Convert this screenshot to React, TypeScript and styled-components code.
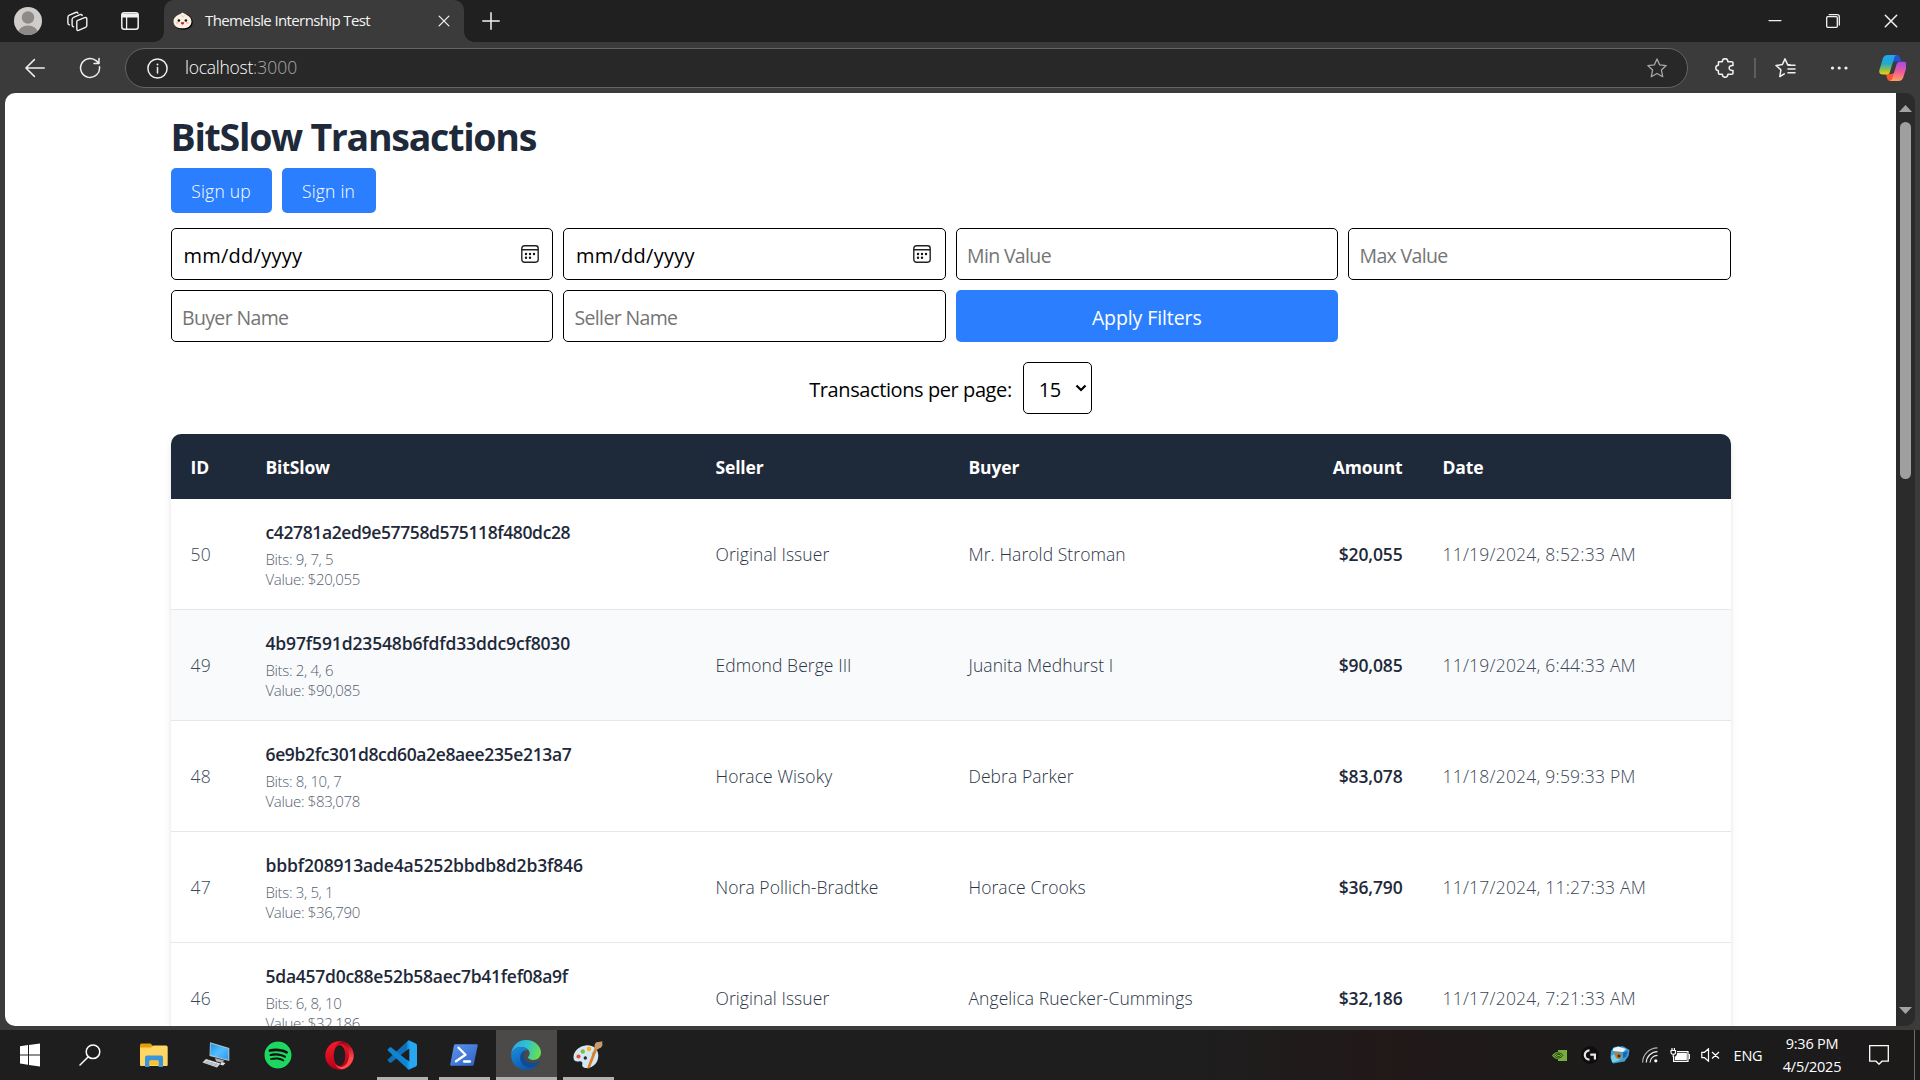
import React from 'react';
import styled, { createGlobalStyle, css } from 'styled-components';
import { FaSpotify } from 'react-icons/fa';

const GlobalStyle = createGlobalStyle`
  *, *::before, *::after { box-sizing: border-box; }
  body {
    margin: 0;
    background: #3b3b3b;
    overflow: hidden;
    font-family: 'Open Sans', 'Noto Sans', sans-serif;
  }
  svg { display: block; flex: none; }
`;

const Desktop = styled.div`
  width: 1920px;
  height: 1080px;
  display: flex;
  flex-direction: column;
  background: #3b3b3b;
`;

/* ---------- Browser chrome ---------- */

const TabStrip = styled.header`
  height: 42px;
  display: flex;
  background: #202020;
  color: #f2f2f2;
`;

const IconSlot = styled.div<{ $w: number }>`
  width: ${(p) => p.$w}px;
  flex: none;
  display: flex;
  align-items: center;
  justify-content: center;
`;

const Tab = styled.div`
  position: relative;
  width: 300px;
  margin-left: 2px;
  padding: 0 14px 0 9px;
  display: flex;
  align-items: center;
  background: #3b3b3b;
  border-radius: 10px 10px 0 0;
  &::before,
  &::after {
    content: '';
    position: absolute;
    bottom: 0;
    width: 10px;
    height: 10px;
  }
  &::before {
    left: -10px;
    background: radial-gradient(circle at 0 0, #202020 9.5px, #3b3b3b 10px);
  }
  &::after {
    right: -10px;
    background: radial-gradient(circle at 100% 0, #202020 9.5px, #3b3b3b 10px);
  }
`;

const TabTitle = styled.span`
  flex: 1;
  margin-left: 12px;
  padding-bottom: 2px;
  font-size: 15px;
  font-weight: 400;
  letter-spacing: -0.62px;
  line-height: 20px;
  color: #f4f4f4;
  white-space: nowrap;
`;

const WindowControls = styled.div`
  display: flex;
  margin-left: auto;
`;

const Toolbar = styled.div`
  height: 51px;
  padding: 6px 0 5px 7px;
  display: flex;
  color: #f0f0f0;
`;

const AddressBar = styled.div`
  width: 1563px;
  height: 40px;
  margin-left: 8px;
  padding: 0 20px 0 21px;
  display: flex;
  align-items: center;
  background: #282828;
  border: 1px solid #646464;
  border-radius: 20px;
`;

const Url = styled.span`
  flex: 1;
  margin-left: 17px;
  padding-bottom: 2px;
  font-size: 17.5px;
  font-weight: 300;
  letter-spacing: -0.25px;
  color: #fff;
`;

const Port = styled.span`
  letter-spacing: 0;
  color: #a8a8a8;
`;

const ExtensionSlot = styled(IconSlot)`
  margin-left: 7px;
`;

const ToolbarDivider = styled.i`
  width: 2px;
  height: 20px;
  align-self: center;
  margin: 0 0 0 -1px;
  background: #5e5e5e;
`;

const Viewport = styled.div`
  height: 933px;
  margin: 0 5px;
  display: flex;
  overflow: hidden;
  border-radius: 10px;
  background: #2b2b2b;
`;

const Scrollbar = styled.div`
  width: 19px;
  padding: 12px 0;
  display: flex;
  flex-direction: column;
  align-items: center;
  background: #2b2b2b;
`;

const Thumb = styled.div`
  width: 11px;
  height: 357px;
  margin: 10px 0 auto;
  border-radius: 6px;
  background: #9f9f9f;
`;

const ScrollArrow = styled.i<{ $down?: boolean }>`
  width: 13px;
  height: 7px;
  background: #a3a3a3;
  clip-path: ${(p) => (p.$down ? 'polygon(0 0, 100% 0, 50% 100%)' : 'polygon(50% 0, 100% 100%, 0 100%)')};
`;

/* ---------- Web page ---------- */

const Page = styled.main`
  width: 1891px;
  height: 933px;
  overflow: hidden;
  background: #fff;
`;

const Container = styled.div`
  width: 1600px;
  margin: 0 auto;
  padding: 20px;
`;

const Title = styled.h1`
  margin: 0 0 10px;
  padding-top: 1px;
  height: 45px;
  font-size: 37.5px;
  font-weight: 700;
  line-height: 45px;
  letter-spacing: -1.27px;
  color: #1e2939;
`;

const AuthButtons = styled.div`
  display: flex;
  gap: 10px;
  margin-bottom: 15px;
`;

const primary = css`
  border: 0;
  border-radius: 5px;
  background: #2b7fff;
  color: #fff;
  font-family: inherit;
`;

const AuthButton = styled.button<{ $w: number }>`
  ${primary}
  width: ${(p) => p.$w}px;
  height: 45px;
  padding: 2px 0 0;
  font-size: 17.5px;
  font-weight: 300;
  line-height: 25px;
  letter-spacing: 0.2px;
`;

const Filters = styled.div`
  display: grid;
  grid-template-columns: repeat(4, 1fr);
  grid-auto-rows: 52px;
  gap: 10px;
  margin-bottom: 20px;
`;

const field = css`
  width: 100%;
  height: 52px;
  border: 1px solid #000;
  border-radius: 5px;
  background: #fff;
  font-family: inherit;
`;

const TextField = styled.input`
  ${field}
  padding: 3px 10.5px 0;
  font-size: 19.5px;
  letter-spacing: -0.65px;
  &::placeholder {
    color: #757575;
    opacity: 1;
  }
`;

const DateField = styled.div`
  ${field}
  padding: 3px 13.5px 0 12px;
  display: flex;
  align-items: center;
  justify-content: space-between;
  font-size: 20px;
  letter-spacing: 0.25px;
  svg { margin-top: -4px; }
`;

const ApplyButton = styled.button`
  ${primary}
  padding: 3px 0 0;
  font-size: 19.5px;
  letter-spacing: -0.1px;
`;

const PageSize = styled.div`
  display: flex;
  align-items: center;
  justify-content: center;
  gap: 11px;
  height: 52px;
  margin-bottom: 20px;
`;

const PageSizeLabel = styled.span`
  padding-top: 4px;
  font-size: 20px;
  font-weight: 500;
  letter-spacing: -0.41px;
  line-height: 30px;
`;

const Select = styled.div`
  ${field}
  width: 69px;
  padding: 3px 4px 0 15px;
  display: flex;
  align-items: center;
  justify-content: space-between;
  font-size: 20px;
  letter-spacing: -0.4px;
  svg { margin-top: -3px; }
`;

const TableCard = styled.div`
  overflow: hidden;
  border-radius: 10px;
  background: #fff;
`;

const CardShadow = styled.div`
  border-radius: 10px;
  box-shadow: 0 5px 8px -1px rgba(0, 0, 0, 0.1), 0 2px 5px -2px rgba(0, 0, 0, 0.1);
`;

const Table = styled.table`
  width: 1560px;
  table-layout: fixed;
  border-collapse: separate;
  border-spacing: 0;
  font-size: 17.5px;
  line-height: 25px;
`;

const HeadCell = styled.th<{ $w?: number; $right?: boolean }>`
  width: ${(p) => (p.$w ? `${p.$w}px` : 'auto')};
  height: 65px;
  padding: 2px 20px 0;
  background: #1e2939;
  color: #fff;
  font-weight: 700;
  letter-spacing: -0.15px;
  text-align: ${(p) => (p.$right ? 'right' : 'left')};
`;

const Row = styled.tr<{ $hovered?: boolean }>`
  background: ${(p) => (p.$hovered ? '#f9fafc' : '#fff')};
`;

const Cell = styled.td<{ $muted?: boolean }>`
  height: 111px;
  padding: 1px 20px 0;
  border-bottom: 1px solid #e5e7eb;
  color: ${(p) => (p.$muted ? '#3c4757' : '#2b3546')};
  font-weight: 300;
  letter-spacing: ${(p) => (p.$muted ? 0.22 : 0.07)}px;
  white-space: nowrap;
`;

const AmountCell = styled(Cell)`
  color: #1e2939;
  font-weight: 600;
  letter-spacing: -0.15px;
  text-align: right;
`;

const Hash = styled.div<{ $tracking: number }>`
  margin-bottom: 4px;
  color: #1e2939;
  font-weight: 600;
  letter-spacing: ${(p) => p.$tracking}px;
`;

const Detail = styled.div`
  color: #555e70;
  font-size: 15px;
  line-height: 20px;
  letter-spacing: -0.34px;
`;

/* ---------- Taskbar ---------- */

const Taskbar = styled.footer`
  height: 50px;
  margin-top: 4px;
  display: flex;
  background: linear-gradient(90deg, #1e1e1e 0%, #1e1e1e 62%, #221919 72%, #1b1b1b 86%, #1d1a1a 100%);
  color: #fff;
`;

const AppList = styled.div`
  display: flex;
  gap: 1px;
  margin-left: 4px;
`;

const AppButton = styled.div<{ $running?: boolean; $active?: boolean }>`
  position: relative;
  width: 61px;
  padding-right: 2px;
  display: flex;
  align-items: center;
  justify-content: center;
  background: ${(p) => (p.$active ? '#4b4a49' : 'transparent')};
  &::after {
    content: '';
    position: absolute;
    bottom: 0;
    left: ${(p) => (p.$active ? 0 : 5)}px;
    right: ${(p) => (p.$active ? 0 : 5)}px;
    height: 3px;
    background: ${(p) => (p.$running ? '#b3b1b0' : 'transparent')};
  }
`;

const Tray = styled.div`
  margin-left: auto;
  display: flex;
`;

const TrayText = styled.div<{ $w: number }>`
  width: ${(p) => p.$w}px;
  display: flex;
  flex-direction: column;
  align-items: center;
  justify-content: center;
  font-size: 14.5px;
  line-height: 23px;
  letter-spacing: -0.25px;
  white-space: nowrap;
`;

const ShowDesktop = styled.div`
  width: 6px;
  margin-left: 9px;
  border-left: 1px solid #6d6b6b;
`;

/* ---------- Icons ---------- */

type StrokeProps = { w: number; h?: number; sw?: number; vb?: string; color?: string; children: React.ReactNode };
const Stroke = ({ w, h = w, sw = 1.5, vb, color = 'currentColor', children }: StrokeProps) => (
  <svg width={w} height={h} viewBox={vb ?? `0 0 ${w} ${h}`} fill="none" stroke={color} strokeWidth={sw} strokeLinecap="round" strokeLinejoin="round">
    {children}
  </svg>
);

const Avatar = () => (
  <svg width="28" height="28" viewBox="0 0 28 28">
    <defs><clipPath id="av"><circle cx="14" cy="14" r="14" /></clipPath></defs>
    <g clipPath="url(#av)">
      <rect width="28" height="28" fill="#cfcdca" />
      <circle cx="14" cy="10.5" r="6.2" fill="#8d8a87" />
      <ellipse cx="14" cy="25.5" rx="9.5" ry="7" fill="#8d8a87" />
    </g>
  </svg>
);

const Workspaces = () => (
  <Stroke w={22} sw={1.4}>
    <path d="M10.6 9.6 18 6.7q2.2-.7 2.2 1.3v6.4q0 1.4-1.3 1.9l-6.4 2.9q-2.3.9-2.3-1.3v-6.3q0-1.4.4-2Z" transform="translate(.6 1)" />
    <path d="M7.6 16.9q-1.5-.3-1.5-1.8V9.6q0-1.7 1.5-2.3l6.3-2.6q1.7-.6 2.3.7" />
    <path d="M3.4 14.9q-1.5-.3-1.5-1.8V7.3Q1.9 5.7 3.4 5.1L9.7 2.5q1.7-.6 2.3.7" />
  </Stroke>
);

const TabActions = () => (
  <svg width="18" height="18" viewBox="0 0 18 18" fill="none" stroke="#f2f2f2" strokeWidth="1.5">
    <rect x="0.8" y="0.8" width="16.4" height="16.4" rx="2.5" />
    <path d="M1 2.6h16M1 4.3h16" strokeWidth="2.4" />
    <path d="M5.6 5v12" strokeWidth="1.3" />
  </svg>
);

const Bun = () => (
  <svg width="20" height="18" viewBox="0 0 20 18">
    <path d="M11 1.8c5 .6 8.6 4.2 8.6 8.4 0 5-4 7.3-9 7.3S1.8 15.5 1.4 11.5Z" fill="#000" />
    <path d="M9.5.5c1 1.3 9 2.8 9 8.9 0 4.6-4 6.9-9 6.9S.5 14 .5 9.4C.5 3.3 8.3 2.2 9.5.5Z" fill="#fbf0df" />
    <path d="M8 2.8q1.3 1 1.6 2.3M11.5 3.2q-.8.9-1 1.7" stroke="#d9c4ae" strokeWidth=".8" fill="none" />
    <circle cx="5.9" cy="8.5" r="1.3" fill="#111" /><circle cx="12.9" cy="8.5" r="1.3" fill="#111" />
    <ellipse cx="4.3" cy="10.8" rx="1.5" ry=".9" fill="#feb4c2" /><ellipse cx="14.5" cy="10.8" rx="1.5" ry=".9" fill="#feb4c2" />
    <path d="M7.8 10.3h3.4q-.2 2.4-1.7 2.4t-1.7-2.4Z" fill="#b71422" />
  </svg>
);

const CloseIcon = ({ size }: { size: number }) => (
  <Stroke w={size} vb="0 0 14 14" sw={1.5}><path d="M1.3 1.3l11.4 11.4M12.7 1.3 1.3 12.7" /></Stroke>
);
const Plus = () => <Stroke w={18} sw={1.5}><path d="M9 .8v16.4M.8 9h16.4" /></Stroke>;
const Minimize = () => <Stroke w={14} h={2} sw={1.2}><path d="M1 .6h12" /></Stroke>;
const Restore = () => (
  <Stroke w={14} sw={1.3}><rect x=".7" y="2.7" width="10.6" height="10.6" rx="1" /><path d="M3.2.7h8q2.1 0 2.1 2v8.4" /></Stroke>
);
const Back = () => <Stroke w={20} sw={1.5}><path d="M19.2 10H1M9.4 1.6.9 10l8.5 8.4" /></Stroke>;
const Refresh = () => (
  <Stroke w={22} sw={1.5}><path d="M20.5 9.8a9.5 9.5 0 1 1-3.1-5.9l2.3 2.3M20 1.6v5h-5" /></Stroke>
);
const Info = () => (
  <Stroke w={21} sw={1.5}><circle cx="10.5" cy="10.5" r="9.6" /><path d="M10.5 9.5v5.5" /><path d="M10.5 6.4v.2" strokeWidth="2" /></Stroke>
);
const Star = () => (
  <Stroke w={20} sw={1.3} color="#a8a8a8"><path d="M10 .9l2.7 6 6.5.7-4.8 4.4 1.3 6.7L10 15.5l-5.7 3.2 1.3-6.7L.8 7.6l6.5-.7Z" /></Stroke>
);
const Puzzle = () => (
  <Stroke w={20} sw={1.5}>
    <path d="M3.5 3.7h3.8c.2-4 5.4-4 5.6 0h3.9q1.2 0 1.2 1.2v2.7c-5.2-.7-5.2 5.5 0 4.8v2.7q0 1.2-1.2 1.2h-3.9c-.2 4-5.4 4-5.6 0H4.6q-1.2 0-1.2-1.2v-2.4c-3.5-.4-3.5-5 0-5.4Z" />
  </Stroke>
);
const Favorites = () => (
  <Stroke w={21} h={20} sw={1.5}>
    <path d="M9.3 15.8 4.8 18.5l1.1-6.6L1 7.4l6.3-.8L10 .9l2.6 5.7 2.6.3" />
    <path d="M13 7.2h7M13 11h7M13 14.8h7" />
  </Stroke>
);
const Dots = () => (
  <svg width="18" height="4" viewBox="0 0 18 4" fill="#f2f2f2"><circle cx="2.5" cy="2" r="1.6" /><circle cx="9.2" cy="2" r="1.6" /><circle cx="16" cy="2" r="1.6" /></svg>
);
const Copilot = () => (
  <svg width="28" height="28" viewBox="-1 0 28 28">
    <defs>
      <linearGradient id="cp1" x1="0" y1="0" x2="0" y2="1"><stop offset="0" stopColor="#1fa5f2" /><stop offset=".45" stopColor="#25a9c8" /><stop offset=".75" stopColor="#8ac04b" /><stop offset="1" stopColor="#f5cf0d" /></linearGradient>
      <linearGradient id="cp2" x1=".5" y1="0" x2=".4" y2="1"><stop offset="0" stopColor="#a54be8" /><stop offset=".5" stopColor="#ee5a9b" /><stop offset="1" stopColor="#ffa25b" /></linearGradient>
    </defs>
    <path d="M14 1h4.2c2 0 2.5 1.5 3 3.2l.9 3.2h-5.5c-2 0-3 1.6-3.3 3Z" fill="#2450d6" />
    <path d="M14.3 27H11c-2 0-2.6-1.5-3-3l-1.1-4h5.3c2 0 3-1 3.6-3Z" fill="#f4562f" />
    <path d="M8.5 1h9.3c-1.6.2-2.2 1.6-2.7 3.2l-4.3 14c-.5 1.5-1.5 2.2-3 2.2H3.5C.6 20.4-.1 18.4.4 16L3.7 5C4.5 2.5 6 1 8.5 1Z" fill="url(#cp1)" />
    <path d="M19.5 27H10.8c1.6-.2 2.2-1.6 2.7-3.2l4.2-13.7c.5-1.5 1.5-2.4 3-2.4h4c2.9 0 3.6 2 3.1 4.4L24.4 23c-.8 2.5-2.4 4-4.9 4Z" fill="url(#cp2)" />
  </svg>
);

const Calendar = () => (
  <svg width="18" height="18" viewBox="0 0 18 18" fill="none" stroke="#222" strokeWidth="1.4">
    <rect x=".8" y=".8" width="16.4" height="16.4" rx="2.6" /><path d="M.8 4.8h16.4" />
    <g fill="#111" stroke="none"><circle cx="5" cy="9" r="1.2" /><circle cx="9" cy="9" r="1.2" /><circle cx="13" cy="9" r="1.2" /><circle cx="5" cy="12.8" r="1.2" /><circle cx="9" cy="12.8" r="1.2" /></g>
  </svg>
);
const Chevron = () => <Stroke w={12} h={8} sw={2.2}><path d="M1.5 1.5 6 6l4.5-4.5" strokeLinecap="butt" strokeLinejoin="miter" /></Stroke>;

const WindowsLogo = () => (
  <svg width="20" height="24" viewBox="0 0 20 24" fill="#fff">
    <path d="M0 3.3 8 2.1v9.4H0ZM9 2 20 .4v11.1H9ZM0 12.5h8v9.3l-8-1.2ZM9 12.5h11v11L9 22Z" />
  </svg>
);
const Search = () => <Stroke w={22} sw={1.5}><circle cx="14" cy="7.8" r="6.8" /><path d="M9.3 12.8 1 21" /></Stroke>;
const Explorer = () => (
  <svg width="28" height="24" viewBox="0 0 28 24">
    <path d="M0 2q0-1.5 1.5-1.5h9L13 3v4H0Z" fill="#e0a106" />
    <path d="M0 4.5h11L13.5 2.5H26q1.7 0 1.7 1.7V22q0 1-1 1H1q-1 0-1-1Z" fill="#ffd564" />
    <path d="M5 24V14.5q0-2 2-2h14q2 0 2 2V24h-4.5v-5.5q0-1-1-1h-7q-1 0-1 1V24Z" fill="#3b95dc" />
    <path d="M9.5 18.5q0-1 1-1h7q1 0 1 1V22h-9Z" fill="#f8c330" />
  </svg>
);
const ThisPc = () => (
  <svg width="28" height="26" viewBox="0 0 28 26">
    <defs><linearGradient id="pc" x1="0" y1="0" x2="1" y2="1"><stop offset="0" stopColor="#1b94ee" /><stop offset=".5" stopColor="#55bdff" /><stop offset="1" stopColor="#2a9bf2" /></linearGradient></defs>
    <path d="M8 .3 27.3 6v13L7.5 14Z" fill="#b7c3cb" /><path d="M8.8 1.5 26.3 6.7v11L8.3 13Z" fill="url(#pc)" />
    <path d="m13 16 9.5 2.5-3 2.2-5.5-1.5Z" fill="#a9b3b9" />
    <path d="m4 17 14.5 4.5-3.5 4L.5 20.5Z" fill="#dfe3e6" /><path d="m3.5 19 13 4M2.3 20.2l13 4M7 18.3l-3 3.2M11 19.5l-3 3.3M15 20.7l-3 3.4" stroke="#9aa4ab" strokeWidth=".7" />
    <path d="m20 20 3.5 1-2.5 2.5-3-1Z" fill="#dfe3e6" />
  </svg>
);
const SpotifyDisc = styled.div`
  display: flex;
  width: 28px;
  height: 28px;
  border-radius: 50%;
  color: #1ed760;
  background: #111;
`;
const Opera = () => (
  <svg width="29" height="29" viewBox="0 0 29 29">
    <defs><linearGradient id="op" x1="0" y1="0" x2=".3" y2="1"><stop offset="0" stopColor="#ff1b2d" /><stop offset="1" stopColor="#b5001a" /></linearGradient><linearGradient id="op2" x1="0" y1="0" x2="0" y2="1"><stop offset="0" stopColor="#9c0010" /><stop offset=".6" stopColor="#ff4b4b" /></linearGradient></defs>
    <circle cx="14.5" cy="14.5" r="14.2" fill="url(#op)" />
    <path d="M10 6.3C12 4 14 3 16 3c4 0 8 5 8 11.5S20 26 16 26c-2 0-4-1-6-3.3 2 4.5 6 6 9 5.3 5.5-2 9.7-7.3 9.7-13.5S24.5 3 19 1c-3-.7-7 .8-9 5.3Z" fill="url(#op2)" />
    <ellipse cx="14.5" cy="14.5" rx="5.8" ry="10.5" fill="#1e1e1e" />
  </svg>
);
const VsCode = () => (
  <svg width="30" height="30" viewBox="0 0 30 30">
    <path d="M21.5.3 1 19.3q-.8.9 0 1.8l1.7 1.5q.8.6 1.6 0L22.3 8.5Z" fill="#0f70b7" />
    <path d="M21.5 29.7 1 10.7q-.8-.9 0-1.8l1.7-1.5q.8-.6 1.6 0l18 14.1Z" fill="#0c86d3" />
    <path d="M21.7.2 28.8 3.6q1.2.6 1.2 2v18.8q0 1.4-1.2 2l-7.1 3.4Z" fill="#27a6f2" />
    <path d="M22.3 8.5v13L14 15Z" fill="#1e1e1e" /><path d="M20.3 1.7 22.3 0v8.5l-2 1.5ZM20.3 28.3l2 1.7v-8.5l-2-1.5Z" fill="#1c97e6" />
  </svg>
);
const PowerShell = () => (
  <svg width="28" height="22" viewBox="0 0 28 22">
    <defs><linearGradient id="ps" x1="0" y1="0" x2="1" y2="1"><stop offset="0" stopColor="#5c96f0" /><stop offset="1" stopColor="#3061c4" /></linearGradient></defs>
    <path d="M5.3.3h21.4q1.3 0 1 1.3l-4 18.8q-.3 1.3-1.6 1.3H1.2q-1.3 0-1-1.3l3.7-18.8Q4.2.3 5.3.3Z" fill="url(#ps)" />
    <path d="m8.5 3.8 7 7-9.5 6.5M14 17.5h6" stroke="#fff" strokeWidth="2.3" fill="none" strokeLinecap="round" strokeLinejoin="round" />
  </svg>
);
const Edge = () => (
  <svg width="30" height="30" viewBox="0 0 30 30">
    <defs>
      <linearGradient id="e1" x1="0" y1=".3" x2="1" y2=".5"><stop offset="0" stopColor="#2aa5e6" /><stop offset=".5" stopColor="#2fc3cf" /><stop offset="1" stopColor="#6be04a" /></linearGradient>
      <linearGradient id="e2" x1="0" y1="0" x2=".6" y2="1"><stop offset="0" stopColor="#1a8fdf" /><stop offset="1" stopColor="#0e56a8" /></linearGradient>
    </defs>
    <path d="M.2 14C.8 6 7 0 15 0c9 0 15 6.5 15 12.5 0 4.500-3.500 7.500-7.500 7.500-3.500 0-5.500-1.400-5.500-2.400 0-.9 1.700-1.500 1.700-4.300C18.700 9.500 14.500 7 10.500 7 5 7 1.200 10.500.2 14Z" fill="url(#e1)" />
    <path d="M.1 15C.3 10.300 5 7 10 7c3 0 6 1.200 7.500 3.200-4-1-8 2-8 7 0 6 5 12 13 9.800q3.300-1 4.500-2.500C24.500 28 20 30 15 30 6 30 0 23 .1 15Z" fill="url(#e2)" />
    <path d="M13.500 10.700c-3 1.300-5 5-4 9.300C11 26 17 29 22.500 27c2.500-.9 5.500-3.500 5.700-4.700.2-.8-.4-.9-1-.6-2 1-4 1.400-6.200 1.200-5-.4-8.500-3.500-8.500-7.400 0-2 .8-3.500 1.900-4.300Z" fill="#0f4c98" />
  </svg>
);
const Paint = () => (
  <svg width="30" height="28" viewBox="0 0 30 28">
    <path d="M12.500 4.500c7-1 12.500 3.500 12.800 9.500.3 7.500-5 13-11.500 13-4 0-5-2-4.500-4 .4-2-1-3-3.500-2.500C2.500 21 .3 19.500.5 16 .8 10 6 5.400 12.500 4.500Z" fill="#d3e8f3" />
    <circle cx="5.500" cy="15.500" r="2.100" fill="#e8483a" /><circle cx="9.800" cy="10.500" r="2.200" fill="#7cc043" /><circle cx="16" cy="8" r="2.300" fill="#fbb21d" />
    <circle cx="20.500" cy="12.500" r="1.800" fill="#8cc4e8" /><circle cx="12.300" cy="17" r="1.700" fill="#2b2b2b" />
    <path d="M24.200 8.500 16.800 27l-2.500.8.700-3.300L21.700 7Z" fill="#dc7d22" />
    <path d="M21.300 7c.3-1.500 0-3.500 1.200-5C23.800.4 26 1.500 29.500.3c-.8 1.700.7 3-.7 5.200-1.300 2-3.300 1.700-4.600 3.300Z" fill="#c79c6c" />
  </svg>
);

const Nvidia = () => (
  <svg width="16" height="11" viewBox="0 0 16 11">
    <path d="M6 0h9v11H6Z" fill="#76b03a" />
    <path d="M0 5.600C2 2.800 4.500 1.800 7 1.800c2.500 0 4.300 1.500 5.500 3.300C11 7.500 9 9.300 6.500 9.300 3.800 9.300 1.500 8 0 5.600Z" fill="#76b03a" />
    <path d="M2 5.500C3.300 3.800 5 3 6.800 3c2 0 3.300 1 4.200 2.300C9.800 7 8.300 8 6.500 8 4.700 8 3 7 2 5.500ZM4.600 5.400c.6-.8 1.400-1.200 2.300-1.100.8.100 1.400.6 1.700 1.200-.6.800-1.200 1.200-2 1.200-.9 0-1.500-.5-2-1.300Z" fill="none" stroke="#22301a" strokeWidth=".9" />
  </svg>
);
const LogiG = () => (
  <svg width="18" height="18" viewBox="0 0 18 18">
    <circle cx="9" cy="9" r="9" fill="#0e0e0e" />
    <path d="M8.500 4.300A4.700 4.700 0 0 0 8.500 13.700" stroke="#e8e8e8" strokeWidth="2.200" fill="none" /><path d="M9.300 8.600h4.600v5" stroke="#e8e8e8" strokeWidth="2.200" fill="none" />
  </svg>
);
const Fish = () => (
  <svg width="20" height="18" viewBox="0 0 20 18">
    <path d="M1 5 4 1l9-.7L19.500 4l-1 6-4 5.500L3 17.500.5 12Z" fill="#3d9fd8" />
    <path d="M3 2.500 8 .5l8 2.500-3 3-10-1Z" fill="#eef3f6" /><path d="M1 10q5-4 9-1t-2 6l-6 1.500Z" fill="#77d0ea" />
    <path d="M4 7.500 9 6.500l3 3-2 4-4-1.500Z" fill="#c7772e" /><circle cx="9" cy="10" r="1.500" fill="#263c22" /><path d="M13 6.500 18 5l-2 6-3 1Z" fill="#1a68b5" />
  </svg>
);
const Wifi = () => (
  <svg width="16" height="16" viewBox="0 0 16 16" fill="none" stroke="#e8e8e8" strokeWidth="1.200">
    <path d="M.6 15.500A15 15 0 0 1 15.500.8" stroke="#b5b5b5" /><path d="M4.300 15.500A11.300 11.300 0 0 1 15.500 4.600" /><path d="M8 15.500A7.600 7.600 0 0 1 15.500 8.300" />
    <circle cx="13.800" cy="13.800" r="1.600" fill="#fff" stroke="none" />
  </svg>
);
const Battery = () => (
  <svg width="20" height="14" viewBox="0 0 20 14" fill="none" stroke="#fff" strokeWidth="1.200">
    <path d="M7 3.600h11v9.800H3.600V8" /><path d="M18.600 6.500h1v4h-1" /><path d="M7.500 5.500h8.700v6H5.500V9.200L7.500 7Z" fill="#fff" />
    <path d="M1 2.500h4.500v2.300q0 1.500-2.200 1.500T1 4.800ZM2 0v2.500M4.400 0v2.500M3.200 6.300V9" />
  </svg>
);
const Muted = () => (
  <svg width="19" height="14" viewBox="0 0 19 14" fill="none" stroke="#fff" strokeWidth="1.200">
    <path d="M.8 4.300h2.700L7.500.8v12.400L3.500 9.700H.8ZM11 4l7 6.500M18 4l-7 6.500" />
  </svg>
);
const Notifications = () => (
  <svg width="20" height="20" viewBox="0 0 20 20" fill="none" stroke="#fff" strokeWidth="1.300"><path d="M.7.700h18.600v15.500H13l-3 3-3-3H.7Z" /></svg>
);

/* ---------- Data ---------- */

const transactions = [
  { id: 50, hash: 'c42781a2ed9e57758d575118f480dc28', tracking: -0.38, bits: '9, 7, 5', value: '$20,055', seller: 'Original Issuer', buyer: 'Mr. Harold Stroman', date: '11/19/2024, 8:52:33 AM' },
  { id: 49, hash: '4b97f591d23548b6fdfd33ddc9cf8030', tracking: -0.14, bits: '2, 4, 6', value: '$90,085', seller: 'Edmond Berge III', buyer: 'Juanita Medhurst I', date: '11/19/2024, 6:44:33 AM' },
  { id: 48, hash: '6e9b2fc301d8cd60a2e8aee235e213a7', tracking: -0.36, bits: '8, 10, 7', value: '$83,078', seller: 'Horace Wisoky', buyer: 'Debra Parker', date: '11/18/2024, 9:59:33 PM' },
  { id: 47, hash: 'bbbf208913ade4a5252bbdb8d2b3f846', tracking: -0.15, bits: '3, 5, 1', value: '$36,790', seller: 'Nora Pollich-Bradtke', buyer: 'Horace Crooks', date: '11/17/2024, 11:27:33 AM' },
  { id: 46, hash: '5da457d0c88e52b58aec7b41fef08a9f', tracking: -0.26, bits: '6, 8, 10', value: '$32,186', seller: 'Original Issuer', buyer: 'Angelica Ruecker-Cummings', date: '11/17/2024, 7:21:33 AM' },
];

const apps = [
  { name: 'explorer', icon: <Explorer /> },
  { name: 'pc', icon: <ThisPc /> },
  { name: 'spotify', icon: <SpotifyDisc><FaSpotify size={28} /></SpotifyDisc> },
  { name: 'opera', icon: <Opera /> },
  { name: 'vscode', icon: <VsCode />, running: true },
  { name: 'powershell', icon: <PowerShell />, running: true },
  { name: 'edge', icon: <Edge />, running: true, active: true },
  { name: 'paint', icon: <Paint />, running: true },
];

export default function App() {
  return (
    <Desktop>
      <GlobalStyle />
      <TabStrip>
        <IconSlot $w={56}><Avatar /></IconSlot>
        <IconSlot $w={42}><Workspaces /></IconSlot>
        <IconSlot $w={64}><TabActions /></IconSlot>
        <Tab>
          <Bun />
          <TabTitle>ThemeIsle Internship Test</TabTitle>
          <CloseIcon size={12} />
        </Tab>
        <IconSlot $w={53}><Plus /></IconSlot>
        <WindowControls>
          <IconSlot $w={58}><Minimize /></IconSlot>
          <IconSlot $w={58}><Restore /></IconSlot>
          <IconSlot $w={58}><CloseIcon size={14} /></IconSlot>
        </WindowControls>
      </TabStrip>
      <Toolbar>
        <IconSlot $w={56}><Back /></IconSlot>
        <IconSlot $w={54}><Refresh /></IconSlot>
        <AddressBar>
          <Info />
          <Url>localhost<Port>:3000</Port></Url>
          <Star />
        </AddressBar>
        <ExtensionSlot $w={60}><Puzzle /></ExtensionSlot>
        <ToolbarDivider />
        <IconSlot $w={58}><Favorites /></IconSlot>
        <IconSlot $w={50}><Dots /></IconSlot>
        <IconSlot $w={56}><Copilot /></IconSlot>
      </Toolbar>

      <Viewport>
        <Page>
          <Container>
            <Title>BitSlow Transactions</Title>
            <AuthButtons>
              <AuthButton $w={101}>Sign up</AuthButton>
              <AuthButton $w={94}>Sign in</AuthButton>
            </AuthButtons>
            <Filters>
              <DateField>mm/dd/yyyy<Calendar /></DateField>
              <DateField>mm/dd/yyyy<Calendar /></DateField>
              <TextField placeholder="Min Value" />
              <TextField placeholder="Max Value" />
              <TextField placeholder="Buyer Name" />
              <TextField placeholder="Seller Name" />
              <ApplyButton>Apply Filters</ApplyButton>
            </Filters>
            <PageSize>
              <PageSizeLabel>Transactions per page:</PageSizeLabel>
              <Select>15<Chevron /></Select>
            </PageSize>
            <CardShadow>
              <TableCard>
                <Table>
                  <thead>
                    <tr>
                      <HeadCell $w={75}>ID</HeadCell>
                      <HeadCell $w={450}>BitSlow</HeadCell>
                      <HeadCell $w={253}>Seller</HeadCell>
                      <HeadCell $w={334}>Buyer</HeadCell>
                      <HeadCell $w={140} $right>Amount</HeadCell>
                      <HeadCell>Date</HeadCell>
                    </tr>
                  </thead>
                  <tbody>
                    {transactions.map((t) => (
                      <Row key={t.id} $hovered={t.id === 49}>
                        <Cell $muted>{t.id}</Cell>
                        <Cell>
                          <Hash $tracking={t.tracking}>{t.hash}</Hash>
                          <Detail>Bits: {t.bits}</Detail>
                          <Detail>Value: {t.value}</Detail>
                        </Cell>
                        <Cell>{t.seller}</Cell>
                        <Cell>{t.buyer}</Cell>
                        <AmountCell>{t.value}</AmountCell>
                        <Cell $muted>{t.date}</Cell>
                      </Row>
                    ))}
                  </tbody>
                </Table>
              </TableCard>
            </CardShadow>
          </Container>
        </Page>
        <Scrollbar>
          <ScrollArrow />
          <Thumb />
          <ScrollArrow $down />
        </Scrollbar>
      </Viewport>

      <Taskbar>
        <IconSlot $w={60}><WindowsLogo /></IconSlot>
        <IconSlot $w={60}><Search /></IconSlot>
        <AppList>
          {apps.map((a) => (
            <AppButton key={a.name} $running={a.running} $active={a.active}>{a.icon}</AppButton>
          ))}
        </AppList>
        <Tray>
          <IconSlot $w={30}><Nvidia /></IconSlot>
          <IconSlot $w={30}><LogiG /></IconSlot>
          <IconSlot $w={30}><Fish /></IconSlot>
          <IconSlot $w={30}><Wifi /></IconSlot>
          <IconSlot $w={30}><Battery /></IconSlot>
          <IconSlot $w={30}><Muted /></IconSlot>
          <TrayText $w={46}>ENG</TrayText>
          <TrayText $w={82}><span>9:36 PM</span><span>4/5/2025</span></TrayText>
          <IconSlot $w={52}><Notifications /></IconSlot>
          <ShowDesktop />
        </Tray>
      </Taskbar>
    </Desktop>
  );
}
